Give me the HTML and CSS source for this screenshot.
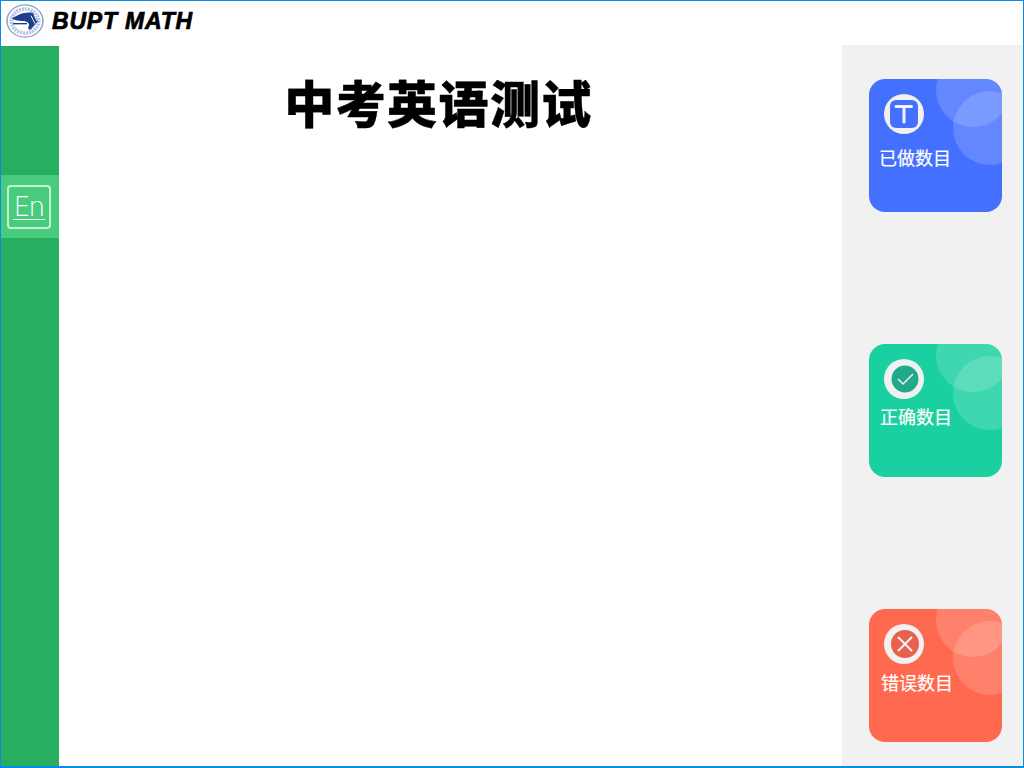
FILE: index.html
```html
<!DOCTYPE html>
<html lang="zh-CN">
<head>
  <meta charset="UTF-8">
  <meta name="viewport" content="width=device-width, initial-scale=1.0">
  <title>BUPT MATH</title>
  <link rel="stylesheet" href="styles.css">
</head>
<body>
  <div class="frame">
    <!-- Top Bar -->
    <div class="top-bar">
      <svg class="logo" width="38" height="34" viewBox="0 0 38 38" preserveAspectRatio="none">
        <circle cx="19" cy="19" r="18" fill="#fff" stroke="#8f9fd0" stroke-width="1.500"/>
        <circle cx="19" cy="19" r="13.500" fill="#fff" stroke="#b4c0e2" stroke-width="4" stroke-dasharray="2 1"/>
        <path d="M6 16C12 12 19 8 27 10L32 19C29 23 27 26 24 29L22 27C24 23 23 20 18 19C14 19 9 19 6 16Z" fill="#1c3f8f"/>
        <path d="M25 13L29 22M28 12L31 19" stroke="#fff" stroke-width="1" fill="none"/>
        <path d="M7 22L21 22" stroke="#1c3f8f" stroke-width="1.500"/>
      </svg>
      <span class="brand">BUPT MATH</span>
    </div>

    <div class="content">
      <!-- Left Menu -->
      <div class="side-menu">
        <div class="menu-item">
          <div class="en-icon"><span class="en-text">En</span></div>
        </div>
      </div>

      <!-- Main Area -->
      <div class="main">
        <h1 class="title">中考英语测试</h1>
      </div>

      <!-- Score Cards -->
      <div class="score-panel">
        <div class="card card-blue">
          <div class="badge">
            <svg width="30" height="30" viewBox="0 0 30 30">
              <rect x="1" y="1" width="28" height="28" rx="6" fill="#4470ff"/>
              <path d="M7 7.500H22.500M15 7.500V23" stroke="#f1f1f1" stroke-width="3" stroke-linecap="round" fill="none"/>
            </svg>
          </div>
          <div class="card-label label-done">已做数目</div>
        </div>
        <div class="card card-green">
          <div class="badge">
            <svg width="30" height="30" viewBox="0 0 30 30">
              <circle cx="16" cy="15" r="13.500" fill="#22a98c"/>
              <path d="M9 15L14 20L24 10" stroke="#f1f1f1" stroke-width="1.500" fill="none"/>
            </svg>
          </div>
          <div class="card-label">正确数目</div>
        </div>
        <div class="card card-red">
          <div class="badge">
            <svg width="30" height="30" viewBox="0 0 30 30">
              <circle cx="16" cy="15" r="14" fill="#e9604c"/>
              <path d="M9 8L23 22M23 8L9 22" stroke="#f5f5f5" stroke-width="2" fill="none"/>
            </svg>
          </div>
          <div class="card-label label-wrong">错误数目</div>
        </div>
      </div>
    </div>
  </div>
</body>
</html>
```

FILE: styles.css
```css
/* General */
html, body {
  margin: 0;
  padding: 0;
  height: 100%;
  overflow: hidden;
}

body {
  font-family: "Noto Sans CJK SC", "Liberation Sans", sans-serif;
  background: #fff;
}

.frame {
  box-sizing: border-box;
  width: 1024px;
  height: 768px;
  display: flex;
  flex-direction: column;
  border: 1px solid #0a8ce2;
  border-bottom-width: 2px;
}

/* Top Bar */
.top-bar {
  height: 44px;
  flex: none;
  box-sizing: border-box;
  display: flex;
  align-items: center;
  padding: 0 0 4px 5px;
  background: #fff;
}

.brand {
  margin-left: 8px;
  font-family: "Liberation Sans", sans-serif;
  font-size: 23px;
  font-weight: 700;
  font-style: italic;
  line-height: 24px;
  letter-spacing: 0.8px;
  color: #000;
  -webkit-text-stroke: 0.7px #000;
}

.content {
  flex: 1;
  display: flex;
  min-height: 0;
}

/* Left Menu */
.side-menu {
  width: 58px;
  flex: none;
  margin-top: 1px;
  padding-top: 129px;
  box-sizing: border-box;
  background: #27ae60;
}

.menu-item {
  height: 63px;
  display: flex;
  align-items: center;
  padding-left: 6px;
  background: #47cc7e;
}

.en-icon {
  box-sizing: border-box;
  width: 44px;
  height: 44px;
  border: 2px solid rgba(255, 255, 255, 0.7);
  border-radius: 4px;
  display: flex;
  justify-content: center;
}

.en-text {
  height: 30px;
  margin-top: 2px;
  padding: 0 1px;
  border-bottom: 1px solid #fff;
  font-family: "Inter", sans-serif;
  font-size: 27px;
  font-weight: 200;
  line-height: 36px;
  letter-spacing: -1px;
  color: #fff;
}

/* Main Area */
.main {
  flex: 1;
  padding-right: 24px;
  text-align: center;
}

.title {
  margin: 23px 0 0;
  font-size: 50px;
  font-weight: 900;
  line-height: 66px;
  letter-spacing: 1.4px;
  color: #000;
  -webkit-text-stroke: 0.4px #000;
}

/* Score Cards */
.score-panel {
  width: 181px;
  flex: none;
  box-sizing: border-box;
  padding: 34px 0 0 27px;
  display: flex;
  flex-direction: column;
  gap: 132px;
  background: #f1f1f1;
}

.card {
  position: relative;
  width: 133px;
  height: 133px;
  flex: none;
  box-sizing: border-box;
  padding: 15px 0 0 15px;
  border-radius: 16px;
  overflow: hidden;
  color: #fff;
}

.card::before,
.card::after {
  content: '';
  position: absolute;
  width: 74px;
  height: 74px;
  border-radius: 50%;
  background: rgba(255, 255, 255, 0.16);
}

.card::before {
  top: -26px;
  left: 67px;
}

.card::after {
  top: 12px;
  left: 84px;
}

.card-blue {
  background: #4470ff;
}

.card-green {
  background: #1bd0a0;
}

.card-red {
  background: #ff6950;
}

.badge {
  width: 40px;
  height: 40px;
  border-radius: 50%;
  background: #f1f1f1;
  display: flex;
  align-items: center;
  justify-content: center;
}

.card-label {
  margin: 3px 0 0 -4px;
  font-size: 18px;
  line-height: 28px;
  white-space: nowrap;
  -webkit-text-stroke: 0.2px #fff;
}

.label-done {
  margin: 9px 0 0 -5px;
}

.label-wrong {
  margin: 4px 0 0 -3px;
}
```
